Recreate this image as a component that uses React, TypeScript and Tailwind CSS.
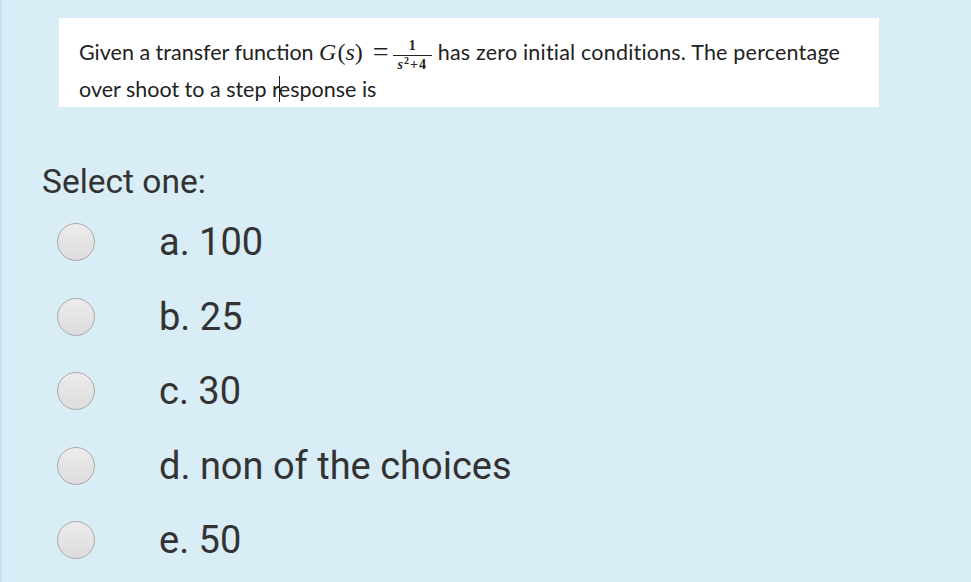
import React from 'react';

const options = ['a. 100', 'b. 25', 'c. 30', 'd. non of the choices', 'e. 50'];

const Radio = () => (
  <span className="block h-[38px] w-[38px] shrink-0 rounded-full border border-[#a9a9a9] bg-gradient-to-b from-[#ececec] to-[#dcdcdc]" />
);

const App = () => {
  return (
    <div className="h-[582px] w-[971px] overflow-hidden border-l-2 border-[#c3e1ee] bg-[#d9edf7]">
      <div className="ml-[57px] mt-[18px] h-[89px] w-[820px] bg-white pl-[20px] pt-[20px] font-['Lato','Open_Sans',sans-serif] text-[21.5px] text-[#222]">
        <div className="flex h-[28px] items-center whitespace-nowrap">
          <span>Given a transfer function&nbsp;</span>
          <span className="font-['Liberation_Serif',serif] text-[24px] italic tracking-[1px]">G</span>
          <span className="font-['Liberation_Serif',serif] text-[24px]">(</span>
          <span className="font-['Liberation_Serif',serif] text-[24px] italic">s</span>
          <span className="font-['Liberation_Serif',serif] text-[24px]">)</span>
          <span className="ml-[10px] mr-[4px] font-['Liberation_Serif',serif] text-[28px] leading-[28px]">=</span>
          <span className="mt-[6px] inline-flex flex-col items-center font-['Liberation_Serif',serif] text-[14px] font-bold leading-[15px]">
            <span className="px-[1px]">1</span>
            <span className="mt-[2px] border-t border-[#222] px-[5px] pt-[1px] tracking-[1px]">
              <span className="italic">s</span>
              <sup className="text-[10px]">2</sup>+4
            </span>
          </span>
          <span className="tracking-[0.2px]">&nbsp;has zero initial conditions. The percentage</span>
        </div>
        <div className="mt-[9px] flex h-[28px] items-center whitespace-nowrap">
          over shoot to a step r
          <span className="mx-[-1px] inline-block h-[26px] w-[1px] bg-[#222]" />
          esponse is
        </div>
      </div>
      <div className="ml-[40px] mt-[57px] font-['Roboto',sans-serif] text-[33.5px] leading-[36px] text-[#333]">
        Select one:
      </div>
      <div className="mt-[5px] flex flex-col font-['Roboto',sans-serif] text-[38px] text-[#333]">
        {options.map((o) => (
          <div key={o} className="flex h-[74.5px] items-center pl-[55px]">
            <Radio />
            <span className="ml-[64px] leading-[40px]">{o}</span>
          </div>
        ))}
      </div>
    </div>
  );
};

export default App;
